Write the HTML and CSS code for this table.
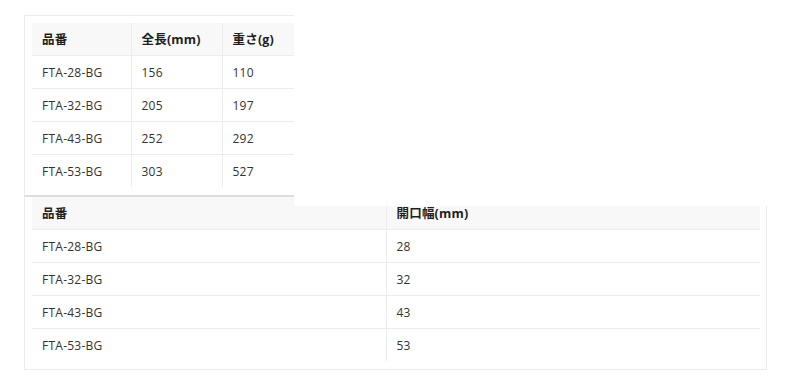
FILE: index.html
```html
<!DOCTYPE html>
<html lang="ja">
<head>
<meta charset="utf-8">
<title>仕様表</title>
<link rel="stylesheet" href="styles.css">
</head>
<body>
<div class="page">
  <div class="sheet sheet-top">
    <table class="spec spec-a">
      <colgroup><col class="c1"><col class="c2"><col class="c3"></colgroup>
      <thead>
        <tr><th>品番</th><th>全長(mm)</th><th>重さ(g)</th></tr>
      </thead>
      <tbody>
        <tr><td>FTA-28-BG</td><td>156</td><td>110</td></tr>
        <tr><td>FTA-32-BG</td><td>205</td><td>197</td></tr>
        <tr><td>FTA-43-BG</td><td>252</td><td>292</td></tr>
        <tr><td>FTA-53-BG</td><td>303</td><td>527</td></tr>
      </tbody>
    </table>
  </div>
  <div class="sheet sheet-bottom">
    <table class="spec spec-b">
      <colgroup><col class="d1"><col class="d2"></colgroup>
      <thead>
        <tr><th>品番</th><th>開口幅(mm)</th></tr>
      </thead>
      <tbody>
        <tr><td>FTA-28-BG</td><td>28</td></tr>
        <tr><td>FTA-32-BG</td><td>32</td></tr>
        <tr><td>FTA-43-BG</td><td>43</td></tr>
        <tr><td>FTA-53-BG</td><td>53</td></tr>
      </tbody>
    </table>
  </div>
</div>
</body>
</html>
```

FILE: styles.css
```css
html, body {
  margin: 0;
  padding: 0;
  background: #ffffff;
}

body {
  font-family: "Open Sans", "Noto Sans CJK JP", sans-serif;
  color: #333333;
}

.page {
  padding: 15px 0 0 24px;
  width: 743px;
}

.sheet {
  box-sizing: border-box;
}

.sheet-top {
  position: relative;
  z-index: 1;
  width: 270px;
  border-top: 1px solid #ececec;
  border-left: 1px solid #ececec;
  border-bottom: 2px solid #dedede;
  padding: 7px 0 7px 7px;
}

/* white backdrop of the pasted upper capture, lying over the lower table */
.sheet-top::after {
  content: "";
  position: absolute;
  left: 100%;
  top: -16px;
  width: 520px;
  height: 206px;
  background: #ffffff;
}

.sheet-bottom {
  width: 743px;
  border-left: 1px solid #ececec;
  border-right: 1px solid #ececec;
  border-bottom: 1px solid #ececec;
  padding: 0 6px 7px 7px;
}

.spec {
  border-collapse: collapse;
  table-layout: fixed;
  font-size: 12px;
  letter-spacing: 0.25px;
}

.spec-a { width: 262px; }
.spec-b { width: 728px; }

.c1 { width: 99px; }
.c2 { width: 91px; }
.c3 { width: 72px; }

.d1 { width: 354px; }
.d2 { width: 374px; }

.spec th,
.spec td {
  text-align: left;
  padding: 7px 10px 5px;
  line-height: 20px;
  border-bottom: 1px solid #ececec;
  white-space: nowrap;
}

.spec th {
  background: #f8f8f8;
  font-weight: 700;
  font-size: 12.5px;
  color: #1f1f1f;
  letter-spacing: 0.2px;
}

.spec td {
  font-weight: 400;
  color: #333333;
}

.spec th + th,
.spec td + td {
  border-left: 1px solid #ececec;
}

.spec-a th:last-child,
.spec-a td:last-child {
  border-right: 1px solid #ececec;
}

.spec tbody tr:last-child td {
  border-bottom-color: transparent;
}
```
